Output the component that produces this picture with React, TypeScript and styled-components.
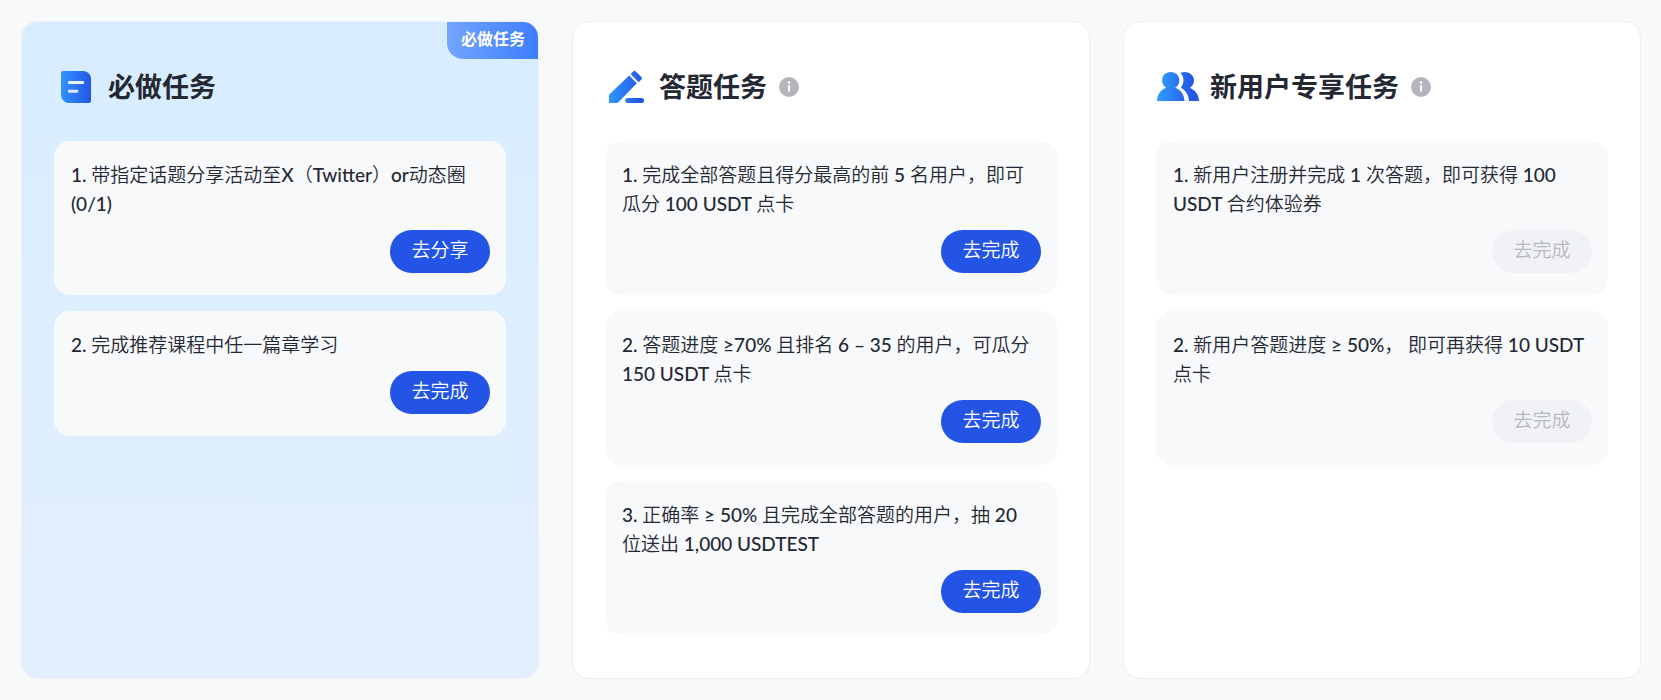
import React from "react";
import styled, { createGlobalStyle } from "styled-components";

const GlobalStyle = createGlobalStyle`
  *, *::before, *::after { box-sizing: border-box; }
  body {
    margin: 0;
    background: #f8f9fb;
    color: #242833;
    font-family: "Lato Medium", Lato, "Noto Sans CJK SC", sans-serif;
  }
`;

const Board = styled.main`
  display: grid;
  grid-template-columns: repeat(3, minmax(0, 1fr));
  gap: 33px;
  padding: 21px 20px 21px 21px;
`;

const Card = styled.section<{ $required?: boolean }>`
  position: relative;
  padding: 44px 32px 43px;
  border: 1px solid #edeff3;
  border-radius: 16px;
  background: ${(p) =>
    p.$required ? "linear-gradient(180deg, #d7edff 0%, #e3efff 100%)" : "#ffffff"};
  background-clip: padding-box;
`;

const Badge = styled.span`
  position: absolute;
  top: 0;
  right: 0;
  height: 37px;
  padding: 0 13px 0 14px;
  border-radius: 0 15px 0 16px;
  background: linear-gradient(90deg, #73a5ff 0%, #3d7dff 100%);
  color: #ffffff;
  font-size: 16px;
  font-weight: 700;
  line-height: 34px;
`;

const CardHeader = styled.header`
  display: flex;
  align-items: center;
  height: 43px;
  margin-bottom: 32px;
`;

const CardIcon = styled.svg`
  flex: none;
  width: 43px;
  height: 43px;
  margin-right: 11px;
`;

const Title = styled.h2`
  margin: 0;
  padding-bottom: 2px;
  font-size: 27px;
  font-weight: 700;
  line-height: 41px;
`;

const InfoButton = styled.button`
  display: flex;
  margin: 0 0 1px 12px;
  padding: 0;
  border: 0;
  background: none;
  cursor: pointer;
`;

const TaskList = styled.ul`
  display: flex;
  flex-direction: column;
  gap: 16px;
  margin: 0;
  padding: 0;
  list-style: none;
`;

const TaskItem = styled.li`
  display: flex;
  flex-direction: column;
  gap: 12px;
  padding: 19px 16px 22px;
  border-radius: 16px;
  background: #f8f9fb;
`;

const TaskText = styled.p`
  margin: 0;
  padding: 0 4px 0 1px;
  font-size: 19px;
  font-weight: 350;
  line-height: 29px;
`;

const ActionButton = styled.button`
  align-self: flex-end;
  width: 100px;
  height: 43px;
  padding: 0 0 4px;
  border: 0;
  border-radius: 22px;
  background: #2354e6;
  color: #ffffff;
  font-family: inherit;
  font-size: 19px;
  font-weight: 350;
  line-height: 29px;
  cursor: pointer;

  &:disabled {
    background: #f1f2f6;
    color: #b7b9c0;
    cursor: default;
  }
`;

function BlueGradient({ id }: { id: string }) {
  return (
    <defs>
      <linearGradient id={id} x1="4" y1="22" x2="38" y2="24" gradientUnits="userSpaceOnUse">
        <stop offset="0" stopColor="#3098ff" />
        <stop offset="1" stopColor="#2354e6" />
      </linearGradient>
    </defs>
  );
}

function DocumentIcon() {
  return (
    <CardIcon viewBox="0 0 43 43" aria-hidden="true">
      <BlueGradient id="document-fill" />
      <path
        fill="url(#document-fill)"
        d="M9 5H29A8 8 0 0 1 37 13V35A2 2 0 0 1 35 37H15A8 8 0 0 1 7 29V7A2 2 0 0 1 9 5Z"
      />
      <rect x="14" y="15" width="16" height="3" rx="1" fill="#e8f2ff" />
      <rect x="14" y="23.7" width="10.3" height="3" rx="1" fill="#d9e9ff" />
    </CardIcon>
  );
}

function PencilIcon() {
  return (
    <CardIcon viewBox="0 0 43 43" aria-hidden="true">
      <BlueGradient id="pencil-fill" />
      <g fill="url(#pencil-fill)">
        <path d="M24.2 9.6L31.8 17.2L13.4 36.2Q12.6 37 11.5 37H4V29.6Q4 28.6 4.7 27.9Z" />
        <path d="M25.6 8L28.2 5.4Q29.5 4.1 30.8 5.4L36.4 11Q37.7 12.3 36.4 13.6L33.6 16.2Z" />
        <rect x="20.3" y="32" width="18.7" height="5" rx="2.5" />
      </g>
    </CardIcon>
  );
}

function UsersIcon() {
  return (
    <CardIcon viewBox="0 0 43 43" aria-hidden="true">
      <BlueGradient id="users-fill" />
      <g fill="url(#users-fill)">
        <path d="M14.7 6C19.8 6 23.3 9.6 23.3 14.2C23.3 17.4 21.7 20.3 19.2 21.8C24.5 23.5 28.4 28.8 28.4 35H1C1 28.8 4.9 23.5 10.2 21.8C7.7 20.3 6.1 17.4 6.1 14.2C6.1 9.6 9.6 6 14.7 6Z" />
        <path d="M24.3 6.9C31.5 4.2 38 8.5 38 14.4C38 17.5 36.4 20.3 33.8 21.9C39.2 23.6 43 28.9 43 35H33C32.7 29.6 30.2 25.3 26 22.6C24.7 21.8 24.9 21.2 25.6 20.2C28.4 16.2 28.2 10.5 24.3 6.9Z" />
      </g>
    </CardIcon>
  );
}

function InfoIcon() {
  return (
    <svg width="20" height="20" viewBox="0 0 20 20" aria-hidden="true">
      <circle cx="10" cy="10" r="10" fill="#b5b6bd" />
      <circle cx="10" cy="5.6" r="1.3" fill="#ffffff" />
      <path d="M9 8.2H11V14.6H9Z" fill="#ffffff" />
    </svg>
  );
}

interface Task {
  text: string;
  action: string;
  disabled?: boolean;
}

interface Group {
  title: string;
  Icon: () => React.ReactElement;
  required?: boolean;
  hint?: boolean;
  tasks: Task[];
}

const groups: Group[] = [
  {
    title: "必做任务",
    Icon: DocumentIcon,
    required: true,
    tasks: [
      { text: "1. 带指定话题分享活动至X（Twitter）or动态圈 (0/1)", action: "去分享" },
      { text: "2. 完成推荐课程中任一篇章学习", action: "去完成" },
    ],
  },
  {
    title: "答题任务",
    Icon: PencilIcon,
    hint: true,
    tasks: [
      { text: "1. 完成全部答题且得分最高的前 5 名用户，即可瓜分 100 USDT 点卡", action: "去完成" },
      { text: "2. 答题进度 ≥70% 且排名 6 – 35 的用户，可瓜分 150 USDT 点卡", action: "去完成" },
      { text: "3. 正确率 ≥ 50% 且完成全部答题的用户，抽 20 位送出 1,000 USDTEST", action: "去完成" },
    ],
  },
  {
    title: "新用户专享任务",
    Icon: UsersIcon,
    hint: true,
    tasks: [
      {
        text: "1. 新用户注册并完成 1 次答题，即可获得 100 USDT 合约体验券",
        action: "去完成",
        disabled: true,
      },
      {
        text: "2. 新用户答题进度 ≥ 50%， 即可再获得 10 USDT 点卡",
        action: "去完成",
        disabled: true,
      },
    ],
  },
];

export default function App() {
  return (
    <>
      <GlobalStyle />
      <Board lang="zh-CN">
        {groups.map(({ title, Icon, required, hint, tasks }) => (
          <Card key={title} $required={required}>
            {required && <Badge>必做任务</Badge>}
            <CardHeader>
              <Icon />
              <Title>{title}</Title>
              {hint && (
                <InfoButton type="button" aria-label={`${title}说明`}>
                  <InfoIcon />
                </InfoButton>
              )}
            </CardHeader>
            <TaskList>
              {tasks.map((task) => (
                <TaskItem key={task.text}>
                  <TaskText>{task.text}</TaskText>
                  <ActionButton type="button" disabled={task.disabled}>
                    {task.action}
                  </ActionButton>
                </TaskItem>
              ))}
            </TaskList>
          </Card>
        ))}
      </Board>
    </>
  );
}
